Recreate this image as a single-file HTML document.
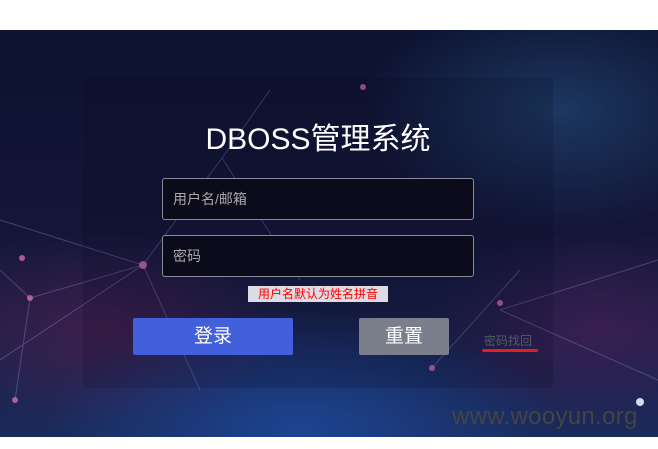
<!DOCTYPE html>
<html><head><meta charset="utf-8"><style>
body{margin:0;width:658px;height:449px;background:#fff;position:relative;overflow:hidden;font-family:"Liberation Sans","Noto Sans CJK SC",sans-serif}
.bg{position:absolute;left:0;top:30px;width:658px;height:407px;background:
radial-gradient(ellipse 200px 120px at 560px 80px,rgba(40,90,140,.5),transparent),
radial-gradient(ellipse 260px 120px at 300px 400px,rgba(30,80,170,.7),transparent),
radial-gradient(ellipse 180px 100px at 600px 300px,rgba(90,30,90,.5),transparent),
radial-gradient(ellipse 200px 100px at 100px 300px,rgba(100,30,80,.5),transparent),
linear-gradient(180deg,#0d1230 0%,#141638 50%,#1a2a5a 100%);}
.panel{position:absolute;left:83px;top:78px;width:470px;height:310px;background:rgba(10,10,30,.15)}
.t{position:absolute;left:0;width:636px;top:114px;text-align:center;color:#fff;font-size:30px}
.in{position:absolute;left:162px;width:312px;height:42px;background:#0b0b1c;border:1px solid #8a8a9a;border-radius:3px;color:#aaa;font-size:14px;line-height:40px;box-sizing:border-box;padding-left:10px}
.tip{position:absolute;left:248px;top:286px;width:140px;height:16px;background:#dcdce2;color:#f00;font-size:12px;line-height:16px;text-align:center}
.b{position:absolute;top:318px;height:37px;color:#fff;font-size:19px;line-height:37px;text-align:center;border-radius:2px}
.wm{position:absolute;left:452px;top:403px;color:#444;font-size:24px;letter-spacing:.3px}
svg{position:absolute;left:0;top:30px}
</style></head><body>
<div class="bg"></div>
<svg width="658" height="407" stroke="rgba(150,150,220,.35)" stroke-width="1" fill="none">
<path d="M0 190 L143 235 L30 268 L15 370 M143 235 L222 128 L300 250 M143 235 L200 360 M222 128 L270 60 M30 268 L0 240 M143 235 L0 330 M500 280 L658 230 M500 280 L658 350 M430 340 L520 240"/>
<g fill="rgba(230,120,180,.7)" stroke="none"><circle cx="143" cy="235" r="4"/><circle cx="30" cy="268" r="3"/><circle cx="15" cy="370" r="3"/><circle cx="22" cy="228" r="3"/><circle cx="363" cy="57" r="3"/><circle cx="500" cy="273" r="3"/><circle cx="432" cy="338" r="3"/><circle cx="640" cy="372" r="4" fill="#cde"/></g>
</svg>
<div class="panel"></div>
<div class="t">DBOSS管理系统</div>
<div class="in" style="top:178px">用户名/邮箱</div>
<div class="in" style="top:235px">密码</div>
<div class="tip">用户名默认为姓名拼音</div>
<div class="b" style="left:133px;width:160px;background:#4360dc">登录</div>
<div class="b" style="left:359px;width:90px;background:#7b7f8c">重置</div>
<div style="position:absolute;left:484px;top:332px;color:#555a6a;font-size:12px">密码找回</div>
<div style="position:absolute;left:482px;top:349px;width:56px;height:3px;background:#e02020;border-radius:2px"></div>
<div class="wm">www.wooyun.org</div>
</body></html>
